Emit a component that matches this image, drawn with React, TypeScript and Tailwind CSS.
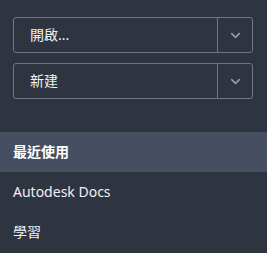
import { ChevronDown } from "lucide-react";

// ── Split button ────────────────────────────────────────────────
function SplitButton({ label }: { label: string }) {
  return (
    <div className="flex h-9 w-[240px] rounded-[3px] border border-[#6c7889]">
      <button className="flex flex-1 items-center pl-4 text-left text-sm text-[#eef0f4]">{label}</button>
      <button className="flex w-[35px] items-center justify-center border-l border-[#6c7889] text-[#959eab]">
        <ChevronDown size={15} strokeWidth={2.5} />
      </button>
    </div>
  );
}

const NAV = [
  { label: "最近使用", active: true },
  { label: "Autodesk Docs", active: false },
  { label: "學習", active: false },
];

export default function App() {
  return (
    <div
      className="h-[253px] w-[267px] bg-[#2e3440] pt-[17px]"
      style={{ fontFamily: '"Noto Sans", "Noto Sans CJK TC", sans-serif' }}
    >
      <div className="flex flex-col gap-[10px] px-[13px]">
        <SplitButton label="開啟..." />
        <SplitButton label="新建" />
      </div>

      {/* ── Nav list ── */}
      <nav className="mt-[33px] flex flex-col">
        {NAV.map((item) => (
          <div
            key={item.label}
            className={
              item.active
                ? "flex h-10 items-center bg-[#464f61] px-[13px] text-sm font-bold text-white"
                : "flex h-10 items-center px-[13px] text-sm text-[#eef0f4]"
            }
          >
            {item.label}
          </div>
        ))}
      </nav>
    </div>
  );
}
